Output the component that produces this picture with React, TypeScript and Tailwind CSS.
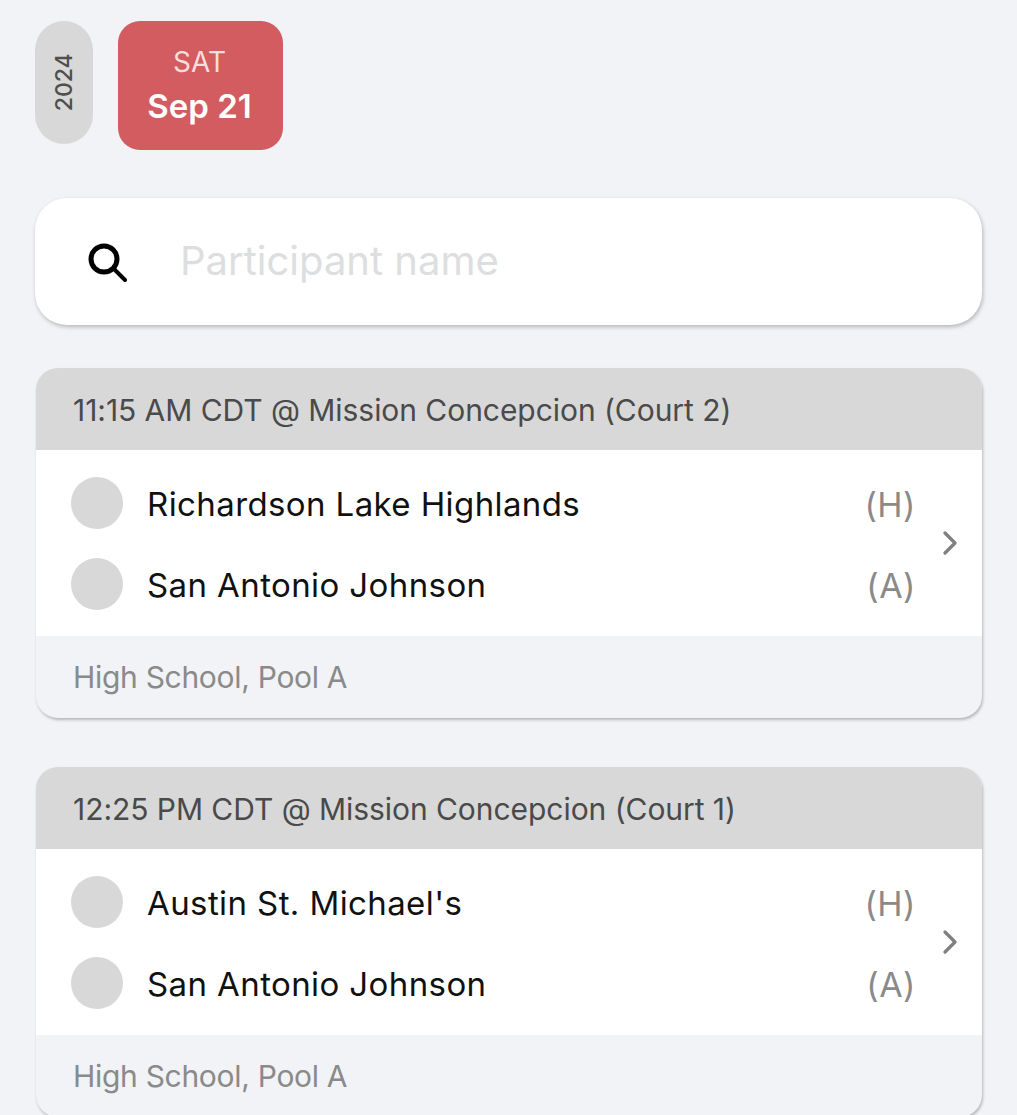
import React from 'react';
import { ChevronRight } from 'lucide-react';

interface Team {
    name: string;
    side: string;
}

interface Game {
    header: string;
    teams: Team[];
    footer: string;
}

const games: Game[] = [
    {
        header: '11:15 AM CDT @ Mission Concepcion (Court 2)',
        teams: [
            { name: 'Richardson Lake Highlands', side: '(H)' },
            { name: 'San Antonio Johnson', side: '(A)' },
        ],
        footer: 'High School, Pool A',
    },
    {
        header: '12:25 PM CDT @ Mission Concepcion (Court 1)',
        teams: [
            { name: "Austin St. Michael's", side: '(H)' },
            { name: 'San Antonio Johnson', side: '(A)' },
        ],
        footer: 'High School, Pool A',
    },
];

const GameCard: React.FC<{ game: Game }> = ({ game }) => (
    <div className="ml-px w-[946px] shrink-0 overflow-hidden rounded-[22px] bg-[#f1f3f6] shadow-[1px_2px_3px_rgba(0,0,0,0.25)]">
        <div className="flex h-[82px] items-center bg-[#d8d8d8] pl-[37px] pt-[2px] text-[30px] tracking-[-0.05px] text-[#4a4a4a]">
            {game.header}
        </div>
        <div className="flex h-[186px] items-center bg-white pl-[35px] pr-[12px]">
            <div className="flex flex-1 flex-col gap-[29px]">
                {game.teams.map((team) => (
                    <div key={team.side} className="flex h-[52px] items-center">
                        <div className="h-[52px] w-[52px] rounded-full bg-[#d8d8d8]" />
                        <span className="ml-6 flex-1 pt-[4px] text-[33px] tracking-[0.4px] text-[#111111]">{team.name}</span>
                        <span className="pt-[4px] text-[34px] tracking-[0.5px] text-[#8a8a8a]">{team.side}</span>
                    </div>
                ))}
            </div>
            <ChevronRight className="ml-[14px] h-10 w-10 shrink-0 text-[#808080]" strokeWidth={2} />
        </div>
        <div className="flex h-[82px] items-center pl-[37px] text-[30px] tracking-[-0.3px] text-[#8a8a8a]">
            {game.footer}
        </div>
    </div>
);

export default function App() {
    return (
        <div className="flex h-[1115px] flex-col overflow-hidden bg-[#f1f3f6] pl-[35px] pt-[21px] font-['Inter',sans-serif]">
            <div className="flex items-start gap-[25px]">
                <div className="flex h-[123px] w-[58px] items-center justify-center rounded-[29px] bg-[#d8d8d8]">
                    <span className="-rotate-90 text-[23px] font-medium text-[#4f4f4f]">2024</span>
                </div>
                <div className="flex h-[129px] w-[165px] flex-col items-center justify-center rounded-[22px] bg-[#d25c60] pr-[2px] text-white">
                    <span className="text-[28px] leading-[40px] text-[#fbdcdc]">SAT</span>
                    <span className="text-[33px] font-semibold leading-[48px]">Sep 21</span>
                </div>
            </div>
            <div className="mt-12 flex h-[127px] w-[947px] shrink-0 items-center rounded-[32px] bg-white pl-[52px] shadow-[1px_2px_4px_rgba(0,0,0,0.25)]">
                <svg viewBox="0 0 40 40" className="h-10 w-10 shrink-0" fill="none" stroke="#000000" strokeLinecap="round">
                    <circle cx="17" cy="17" r="13" strokeWidth="5" />
                    <path d="M27 27 L38 38" strokeWidth="4" />
                </svg>
                <span className="ml-[53px] pb-[2px] text-[40px] text-[#dcdee0]">Participant name</span>
            </div>
            <div className="mt-[43px] flex flex-col gap-[49px]">
                {games.map((game) => (
                    <GameCard key={game.header} game={game} />
                ))}
            </div>
        </div>
    );
}
